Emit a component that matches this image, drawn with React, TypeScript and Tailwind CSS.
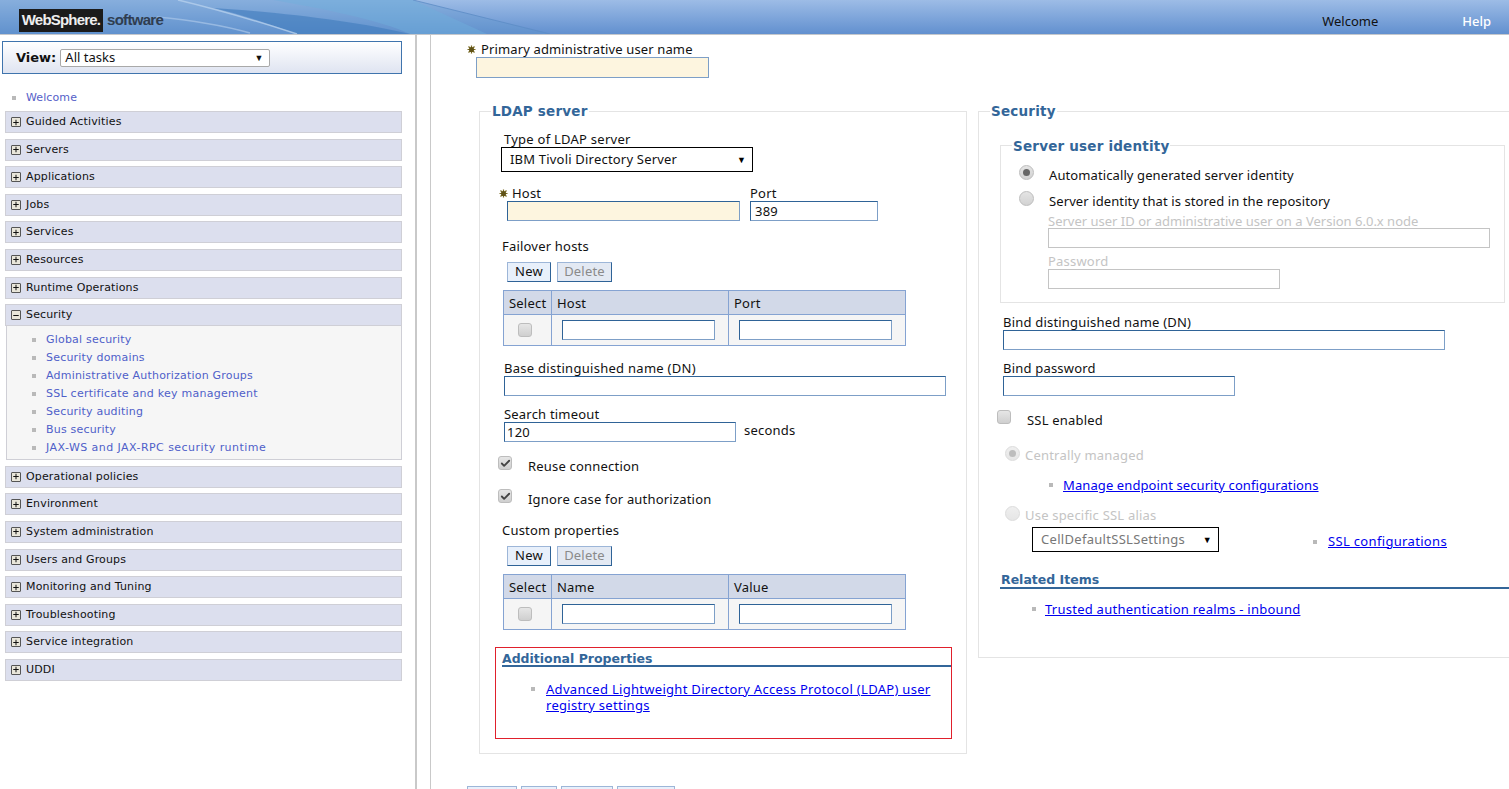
import type { ReactNode } from "react";
import { Check, Minus, Plus } from "lucide-react";

const navTop = ["Guided Activities", "Servers", "Applications", "Jobs", "Services", "Resources", "Runtime Operations"];
const navBottom = ["Operational policies", "Environment", "System administration", "Users and Groups", "Monitoring and Tuning", "Troubleshooting", "Service integration", "UDDI"];
const securityLinks = [
  { name: "Global security", track: "tracking-[0.2px]" },
  { name: "Security domains", track: "tracking-[0.2px]" },
  { name: "Administrative Authorization Groups", track: "tracking-[0.2px]" },
  { name: "SSL certificate and key management", track: "tracking-[0.25px]" },
  { name: "Security auditing", track: "tracking-[0.2px]" },
  { name: "Bus security", track: "tracking-[0.2px]" },
  { name: "JAX-WS and JAX-RPC security runtime", track: "tracking-[0.45px]" },
];

function Bullet({ className = "" }: { className?: string }) {
  return <span className={"block w-[4px] h-[4px] bg-[#b9b9b9] shrink-0 " + className} />;
}

function NavRow({ label, open }: { label: string; open?: boolean }) {
  return (
    <div className="flex items-center h-[22px] border border-[#cfcfd6] bg-[#dcdfee] text-[#111] font-['DejaVu_Sans',sans-serif] text-[11px] leading-[14px] tracking-[0.15px] pl-[5px]">
      <span className="flex items-center justify-center w-[10px] h-[10px] border border-[#555] bg-[#e9e6da] rounded-[1px] mr-[5px]">
        {open ? <Minus size={9} strokeWidth={3} /> : <Plus size={9} strokeWidth={3} />}
      </span>
      {label}
    </div>
  );
}

function Star({ className = "" }: { className?: string }) {
  return (
    <svg viewBox="0 0 9 9" className={"w-[9px] h-[9px] shrink-0 " + className}>
      <path d="M4.5 0.5V8.5M0.5 4.5H8.5M1.5 1.5L7.5 7.5M7.5 1.5L1.5 7.5" stroke="#7a6a22" strokeWidth="1.2" />
      <circle cx="4.5" cy="4.5" r="2.5" fill="#5f5216" />
    </svg>
  );
}

function Field({ w, required, value, disabled, pad = "px-[4px]" }: { w: string; required?: boolean; value?: string; disabled?: boolean; pad?: string }) {
  const tone = disabled
    ? "border-[#c4c4c4]"
    : "border-[#7d9fc7] border-t-[#2f6397] border-l-[#2f6397]";
  return (
    <div className={w + " " + pad + " h-[20px] shrink-0 border text-[13px] leading-[18px] text-[#111] " + tone + " " + (required ? "bg-[#fdf5df]" : "bg-white")}>
      {value}
    </div>
  );
}

function Text({ children, className = "" }: { children: ReactNode; className?: string }) {
  return <div className={"h-[16px] leading-[16px] text-[13px] whitespace-nowrap " + className}>{children}</div>;
}

function CheckBox({ checked }: { checked?: boolean }) {
  return (
    <span className="flex items-center justify-center w-[14px] h-[14px] shrink-0 rounded-[3px] border border-[#bdbdbd] bg-gradient-to-b from-[#e6e6e6] to-[#cfcfcf]">
      {checked && <Check size={11} strokeWidth={4} className="text-[#444]" />}
    </span>
  );
}

function Radio({ checked, faded }: { checked?: boolean; faded?: boolean }) {
  return (
    <span className={"flex items-center justify-center w-[15px] h-[15px] shrink-0 rounded-full border bg-gradient-to-b " + (faded ? "border-[#dcdcdc] from-[#efefef] to-[#e6e6e6]" : "border-[#bdbdbd] from-[#e4e4e4] to-[#d2d2d2]")}>
      {checked && <span className={"w-[7px] h-[7px] rounded-full " + (faded ? "bg-[#bdbdbd]" : "bg-[#666]")} />}
    </span>
  );
}

function Dropdown({ text, w, muted }: { text: string; w: string; muted?: boolean }) {
  return (
    <div className={w + " h-[25px] flex items-center justify-between border-[1.5px] border-black pl-[8px] pr-[6px] text-[13px] " + (muted ? "tracking-[0.3px] text-[#777]" : "text-[#111]")}>
      {text}
      <span className="text-[9px] text-black">▼</span>
    </div>
  );
}

function SmallButton({ children, disabled, w }: { children: ReactNode; disabled?: boolean; w: string }) {
  return (
    <div className={w + " h-[20px] flex items-center justify-center text-[13px] border border-[#9db6d8] border-r-[#2f6397] border-b-[#2f6397] " + (disabled ? "bg-[#e3e9f3] text-[#8a8a8a]" : "bg-[#e8f0fb] text-[#111]")}>
      {children}
    </div>
  );
}

function EditTable({ a, b }: { a: string; b: string }) {
  return (
    <div className="w-[403px] border border-[#85a3d2] text-[13px]">
      <div className="flex h-[24px] bg-[#d2d9e8] border-b border-[#85a3d2] leading-[24px]">
        <div className="w-[48px] pl-[5px] border-r border-[#85a3d2]">Select</div>
        <div className="w-[177px] pl-[5px] border-r border-[#85a3d2]">{a}</div>
        <div className="flex-1 pl-[5px]">{b}</div>
      </div>
      <div className="flex h-[30px] bg-[#f5f5f5] items-center">
        <div className="w-[48px] h-full flex items-center pl-[14px] border-r border-[#85a3d2]">
          <CheckBox />
        </div>
        <div className="w-[177px] h-full flex items-center pl-[10px] border-r border-[#85a3d2]">
          <Field w="w-[153px]" />
        </div>
        <div className="flex-1 h-full flex items-center pl-[10px]">
          <Field w="w-[153px]" />
        </div>
      </div>
    </div>
  );
}

function Link({ children, track = "tracking-[0.25px]" }: { children: ReactNode; track?: string }) {
  return <a className={"text-[#0000ee] underline leading-[16px] " + track}>{children}</a>;
}

function Legend({ children, ml, lead = "leading-[18px]" }: { children: ReactNode; ml: string; lead?: string }) {
  return <legend className={ml + " " + lead + " px-[1px] h-[18px] text-[13.5px] font-bold text-[#336699] tracking-[0.2px] font-['DejaVu_Sans',sans-serif]"}>{children}</legend>;
}

export default function App() {
  return (
    <div className="h-[789px] w-[1509px] overflow-hidden bg-white text-[#111] tracking-[0.2px] font-['Noto_Sans','Liberation_Sans',sans-serif]">
      <header className="relative h-[35px] border-b border-[#c4c7cc] bg-gradient-to-b from-[#9dbce6] to-[#6290cf] flex items-center overflow-hidden">
        <svg viewBox="0 0 700 34" className="absolute left-0 top-0 w-[700px] h-[34px]">
          <path d="M0 0H413L550 34H0Z" fill="#5f96cc" opacity="0.35" />
          <path d="M273 0H413L487 34H410C380 20 320 8 273 0Z" fill="#6eb0dc" opacity="0.45" />
          <path d="M213 8C280 12 360 22 410 34H297C270 24 240 14 213 8Z" fill="#3f7cbc" opacity="0.6" />
          <path d="M178 0C220 10 260 22 297 34" stroke="#b5cfec" strokeWidth="1.5" fill="none" opacity="0.8" />
          <path d="M157 17C190 20 225 26 250 33" stroke="#a9c6e8" strokeWidth="1.5" fill="none" opacity="0.7" />
          <path d="M413 0L550 34" stroke="#5c8cc6" strokeWidth="1" fill="none" opacity="0.8" />
        </svg>
        <div className="relative ml-[19px] mt-[7px] flex items-center">
          <div className="w-[84px] h-[23px] bg-[#1b1b1b] text-[#eee] font-bold text-[15px] flex items-center justify-center tracking-[-0.8px] font-['Liberation_Sans',sans-serif]">WebSphere.</div>
          <div className="ml-[4px] text-[#2f3d50] font-bold text-[15px] tracking-[-0.7px] font-['Liberation_Sans',sans-serif]">software</div>
        </div>
        <div className="relative ml-auto flex items-center mt-[9px] text-[13px] tracking-normal">
          <span className="text-[#111]">Welcome</span>
          <span className="ml-[84px] mr-[18px] text-white font-medium">Help</span>
        </div>
      </header>

      <div className="flex h-[754px]">
        <aside className="w-[417px] shrink-0 border-r-2 border-[#c9c9c9] pl-[2px] pr-[13px] pt-[6px]">
          <div className="h-[33px] flex items-center w-[400px] border border-[#3f74ad] bg-gradient-to-b from-white to-[#dfe4f1] pl-[13px]">
            <span className="font-bold text-[13px] tracking-normal font-['DejaVu_Sans',sans-serif] mr-[4px]">View:</span>
            <div className="w-[210px] h-[18px] flex items-center justify-between border border-[#a9a9a9] rounded-[2px] bg-white pl-[4px] pr-[6px] text-[13px] tracking-normal">
              All tasks
              <span className="text-[9px]">▼</span>
            </div>
          </div>
          <div className="ml-[3px] font-['DejaVu_Sans',sans-serif] text-[11px] leading-[14px]">
            <div className="flex items-center h-[16px] mt-[16px] mb-[5px] text-[#5560c8] tracking-[0.1px]">
              <Bullet className="ml-[7px] mr-[10px]" />
              Welcome
            </div>
            <div className="flex flex-col gap-[5.6px]">
              {navTop.map((n) => <NavRow key={n} label={n} />)}
              <div>
                <NavRow label="Security" open />
                <div className="h-[134px] bg-[#f6f6f6] border border-t-0 border-[#cfcfd6] ml-[1px] pt-[5px]">
                  {securityLinks.map((s) => (
                    <div key={s.name} className={"flex items-center h-[18px] text-[#4f5fc9] " + s.track}>
                      <Bullet className="ml-[25px] mr-[10px]" />
                      {s.name}
                    </div>
                  ))}
                </div>
              </div>
              {navBottom.map((n) => <NavRow key={n} label={n} />)}
            </div>
          </div>
        </aside>

        <div className="w-[13px] shrink-0" />

        <main className="flex-1 min-w-0 border-l border-[#c9c9c9] pt-[6px] pl-[36px] overflow-hidden">
          <Text className="flex items-center tracking-[0.13px]">
            <Star className="mr-[5px]" />
            Primary administrative user name
          </Text>
          <div className="ml-[9px] w-[233px] h-[21px] border border-[#7d9fc7] bg-[#fdf5df]" />

          <div className="flex mt-[24px] ml-[12px] w-[1100px] items-start">
            <fieldset className="w-[488px] h-[652px] shrink-0 border border-[#e4e4e4] pl-[21px]">
              <Legend ml="ml-[-10px]">LDAP server</Legend>
              <Text className="mt-[11px] ml-[3px] tracking-[0.25px]">Type of LDAP server</Text>
              <Dropdown text="IBM Tivoli Directory Server" w="w-[252px]" />

              <div className="flex mt-[13px] ml-[-2px]">
                <div>
                  <Text className="flex items-center">
                    <Star className="mr-[4px] w-[7px]" />
                    Host
                  </Text>
                  <div className="ml-[8px]"><Field w="w-[233px]" required /></div>
                </div>
                <div className="ml-[10px]">
                  <Text>Port</Text>
                  <Field w="w-[128px]" value="389" />
                </div>
              </div>

              <Text className="mt-[17px] ml-[1px]">Failover hosts</Text>
              <div className="flex gap-[6px] mt-[8px] ml-[6px]">
                <SmallButton w="w-[44px]">New</SmallButton>
                <SmallButton w="w-[55px]" disabled>Delete</SmallButton>
              </div>
              <div className="mt-[8px] ml-[2px]"><EditTable a="Host" b="Port" /></div>

              <Text className="mt-[14px] ml-[3px] tracking-[0.28px]">Base distinguished name (DN)</Text>
              <div className="ml-[3px]"><Field w="w-[442px]" /></div>

              <Text className="mt-[10px] ml-[3px]">Search timeout</Text>
              <div className="flex items-start ml-[3px]">
                <Field w="w-[232px]" value="120" pad="px-[2px]" />
                <span className="ml-[8px] text-[13px] leading-[16px]">seconds</span>
              </div>

              <div className="flex mt-[14px] ml-[-3px] h-[18px]">
                <CheckBox checked />
                <span className="ml-[16px] mt-[2px] text-[13px] leading-[16px]">Reuse connection</span>
              </div>
              <div className="flex mt-[15px] ml-[-3px] h-[18px]">
                <CheckBox checked />
                <span className="ml-[16px] mt-[2px] text-[13px] leading-[16px]">Ignore case for authorization</span>
              </div>

              <Text className="mt-[15px] ml-[1px]">Custom properties</Text>
              <div className="flex gap-[6px] mt-[8px] ml-[6px]">
                <SmallButton w="w-[44px]">New</SmallButton>
                <SmallButton w="w-[55px]" disabled>Delete</SmallButton>
              </div>
              <div className="mt-[8px] ml-[2px]"><EditTable a="Name" b="Value" /></div>

              <div className="mt-[17px] ml-[-6px] w-[457px] h-[92px] border border-[#e0202c] pl-[6px]">
                <div className="h-[19px] leading-[22px] border-b-2 border-[#336699] text-[12.5px] tracking-normal font-bold text-[#336699] font-['DejaVu_Sans',sans-serif]">Additional Properties</div>
                <div className="flex mt-[14px] text-[13px]">
                  <Bullet className="ml-[29px] mr-[11px] mt-[6px]" />
                  <div className="w-[395px] leading-[16px]"><Link track="tracking-[0.3px]">Advanced Lightweight Directory Access Protocol (LDAP) user registry settings</Link></div>
                </div>
              </div>
            </fieldset>

            <fieldset className="ml-[11px] w-[560px] h-[556px] shrink-0 border border-[#e4e4e4] pl-[21px]">
              <Legend ml="ml-[-10px]">Security</Legend>
              <fieldset className="mt-[16px] w-[505px] h-[167px] border border-[#e4e4e4]">
                <Legend ml="ml-[11px]" lead="leading-[20px]">Server user identity</Legend>
                <div className="flex mt-[11px] ml-[18px]">
                  <Radio checked />
                  <span className="ml-[15px] mt-[2px] text-[13px] leading-[16px] tracking-[0.1px]">Automatically generated server identity</span>
                </div>
                <div className="flex mt-[8px] ml-[18px]">
                  <Radio />
                  <span className="ml-[15px] mt-[2px] text-[13px] leading-[16px] tracking-[0.1px]">Server identity that is stored in the repository</span>
                </div>
                <Text className="ml-[47px] mt-[4px] text-[#c4c4c4] tracking-normal">Server user ID or administrative user on a Version 6.0.x node</Text>
                <div className="ml-[47px] mt-[-1px]"><Field w="w-[442px]" disabled /></div>
                <Text className="ml-[47px] mt-[5px] text-[#c4c4c4]">Password</Text>
                <div className="ml-[47px]"><Field w="w-[232px]" disabled /></div>
              </fieldset>

              <Text className="mt-[11px] ml-[3px]">Bind distinguished name (DN)</Text>
              <div className="ml-[3px]"><Field w="w-[442px]" /></div>
              <Text className="mt-[10px] ml-[3px]">Bind password</Text>
              <div className="ml-[3px]"><Field w="w-[232px]" /></div>

              <div className="flex mt-[14px] ml-[-3px] h-[18px]">
                <CheckBox />
                <span className="ml-[16px] mt-[2px] text-[13px] leading-[16px]">SSL enabled</span>
              </div>

              <div className="flex mt-[18px] ml-[5px] text-[#c4c4c4]">
                <Radio checked faded />
                <span className="ml-[5px] mt-[1px] text-[13px] leading-[16px]">Centrally managed</span>
              </div>
              <div className="flex items-center mt-[14px] ml-[49px] text-[13px] h-[16px]">
                <Bullet className="mr-[10px]" />
                <Link track="tracking-[0.1px]">Manage endpoint security configurations</Link>
              </div>
              <div className="flex mt-[13px] ml-[5px] text-[#c4c4c4]">
                <Radio faded />
                <span className="ml-[5px] mt-[1px] text-[13px] leading-[16px]">Use specific SSL alias</span>
              </div>
              <div className="flex items-center mt-[4px] ml-[32px]">
                <Dropdown text="CellDefaultSSLSettings" w="w-[187px]" muted />
                <Bullet className="ml-[94px] mr-[11px] mt-[4px]" />
                <span className="text-[13px] mt-[4px]"><Link track="tracking-[0.33px]">SSL configurations</Link></span>
              </div>

              <div className="mt-[19px] h-[18px] leading-[17px] w-[540px] border-b-2 border-[#336699] text-[12.5px] tracking-normal font-bold text-[#336699] font-['DejaVu_Sans',sans-serif]">
                <span className="ml-[1px]">Related Items</span>
              </div>
              <div className="flex items-center mt-[12px] ml-[32px] text-[13px] h-[16px]">
                <Bullet className="mr-[9px]" />
                <Link>Trusted authentication realms - inbound</Link>
              </div>
            </fieldset>
          </div>

          <div className="flex gap-[4px] mt-[32px]">
            {["w-[50px]", "w-[36px]", "w-[52px]", "w-[58px]"].map((w) => (
              <div key={w} className={w + " h-[20px] border border-[#9db6d8] bg-[#e8f0fb]"} />
            ))}
          </div>
        </main>
      </div>
    </div>
  );
}
